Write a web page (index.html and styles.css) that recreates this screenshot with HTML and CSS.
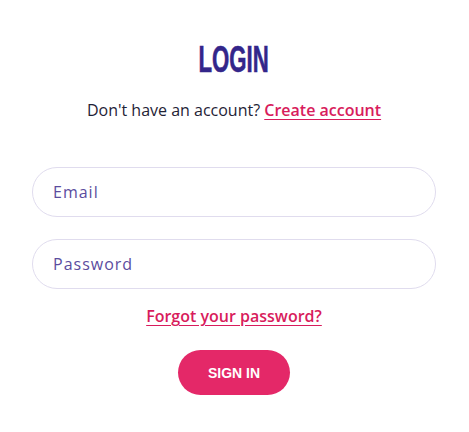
FILE: index.html
```html
<!DOCTYPE html>
<html lang="en">
<head>
    <meta charset="UTF-8">
    <meta name="viewport" content="width=device-width, initial-scale=1.0">
    <title>Login</title>
    <link rel="stylesheet" href="styles.css">
</head>
<body>

<div class="login">
    <h1 class="login-title"><span>LOGIN</span></h1>
    <p class="login-sub">Don't have an account? <a href="#">Create account</a></p>

    <form class="login-form" action="#" method="post">
        <input type="email" name="email" placeholder="Email">
        <input type="password" name="password" placeholder="Password">
        <a class="forgot" href="#">Forgot your password?</a>
        <button type="submit">SIGN IN</button>
    </form>
</div>

</body>
</html>
```

FILE: styles.css
```css
body {
    font-family: "Open Sans", Arial, sans-serif;
    margin: 0;
    padding: 0;
    background-color: #fff;
    color: #1f2336;
}
.login {
    padding: 40px 33px 0 32px;
    text-align: center;
}
.login-title {
    margin: 0;
    font-family: "Liberation Sans", Arial, sans-serif;
    font-size: 37px;
    line-height: 40px;
    color: #33268a;
    -webkit-text-stroke: 0.6px #33268a;
}
.login-title span {
    display: inline-block;
    transform: scaleX(0.6);
}
.login-sub {
    margin: 18px 0 0;
    font-size: 16px;
    line-height: 24px;
}
.login-sub a, .forgot {
    color: #d81c5c;
    font-weight: 600;
    text-decoration: underline;
    text-underline-offset: 3px;
}
.login-form {
    display: flex;
    flex-direction: column;
    align-items: center;
    margin-top: 45px;
}
.login-form input {
    box-sizing: border-box;
    width: 100%;
    height: 50px;
    margin-bottom: 22px;
    padding: 0 20px;
    border: 1px solid #e0dcee;
    border-radius: 25px;
    font-family: "Open Sans", Arial, sans-serif;
    font-size: 16px;
    letter-spacing: 1px;
    outline: none;
}
.login-form input::placeholder {
    color: #5b4c9e;
}
.forgot {
    margin-top: -7px;
    font-size: 16px;
    line-height: 24px;
}
.login-form button {
    margin-top: 22px;
    width: 112px;
    height: 45px;
    background-color: #e42868;
    color: #fff;
    border: none;
    border-radius: 23px;
    font-family: "Liberation Sans", Arial, sans-serif;
    font-weight: bold;
    font-size: 14px;
    cursor: pointer;
}
```
